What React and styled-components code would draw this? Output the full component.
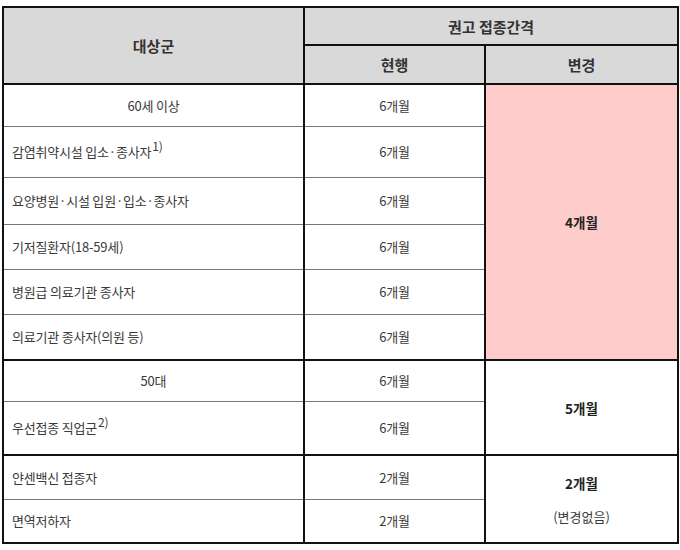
import React from 'react';
import styled, { createGlobalStyle } from 'styled-components';

const GlobalStyle = createGlobalStyle`
  html, body {
    margin: 0;
    padding: 0;
    background: #ffffff;
  }
  body {
    font-family: "Noto Sans CJK KR", "Noto Sans", sans-serif;
  }
`;

const Wrapper = styled.div`
  padding: 6px 3px 0 2px;
  width: 675px;
`;

const Table = styled.table`
  width: 675px;
  border-collapse: collapse;
  table-layout: fixed;
  border: 2px solid #111;
`;

const HeadCell = styled.th`
  background: #d9d9d9;
  border: 2px solid #111;
  color: #333;
  font-size: 15px;
  font-weight: 700;
  text-align: center;
  vertical-align: middle;
  padding: 0;
  height: ${(p) => p.$h}px;
`;

const Row = styled.tr`
  height: ${(p) => p.$h}px;
`;

const Cell = styled.td`
  border-left: 2px solid #111;
  border-right: 2px solid #111;
  border-top: ${(p) => (p.$groupStart ? '2px solid #111' : '1px solid #777')};
  border-bottom: 1px solid #777;
  color: #3a3a3a;
  font-size: 13px;
  letter-spacing: -0.2px;
  text-align: ${(p) => (p.$left ? 'left' : 'center')};
  padding: ${(p) => (p.$left ? '0 0 0 8px' : '0')};
  vertical-align: middle;
  white-space: nowrap;
`;

const ChangeCell = styled.td`
  border: 2px solid #111;
  background: ${(p) => (p.$highlight ? '#ffcccc' : '#ffffff')};
  color: #222;
  font-size: 13.5px;
  font-weight: 700;
  text-align: center;
  vertical-align: middle;
  padding: 0;
`;

const Note = styled.div`
  margin-top: 14px;
  font-weight: 400;
  color: #3a3a3a;
  font-size: 13px;
`;

const Sup = styled.sup`
  font-size: 12px;
  vertical-align: 6px;
  line-height: 0;
  margin-left: 1px;
`;

const groups = [
  {
    change: '4개월',
    highlight: true,
    rows: [
      { name: '60세 이상', center: true, current: '6개월', h: 42 },
      { name: '감염취약시설 입소·종사자', sup: '1)', current: '6개월', h: 51 },
      { name: '요양병원·시설 입원·입소·종사자', current: '6개월', h: 47 },
      { name: '기저질환자(18-59세)', current: '6개월', h: 45 },
      { name: '병원급 의료기관 종사자', current: '6개월', h: 45 },
      { name: '의료기관 종사자(의원 등)', current: '6개월', h: 46 },
    ],
  },
  {
    change: '5개월',
    rows: [
      { name: '50대', center: true, current: '6개월', h: 41 },
      { name: '우선접종 직업군', sup: '2)', current: '6개월', h: 54 },
    ],
  },
  {
    change: '2개월',
    note: '(변경없음)',
    rows: [
      { name: '얀센백신 접종자', current: '2개월', h: 44 },
      { name: '면역저하자', current: '2개월', h: 44 },
    ],
  },
];

export default function App() {
  return (
    <Wrapper>
      <GlobalStyle />
      <Table>
        <colgroup>
          <col style={{ width: 301 }} />
          <col style={{ width: 181 }} />
          <col style={{ width: 193 }} />
        </colgroup>
        <thead>
          <tr>
            <HeadCell rowSpan={2}>대상군</HeadCell>
            <HeadCell colSpan={2} $h={36}>권고 접종간격</HeadCell>
          </tr>
          <tr>
            <HeadCell $h={37}>현행</HeadCell>
            <HeadCell $h={37}>변경</HeadCell>
          </tr>
        </thead>
        <tbody>
          {groups.map((g) =>
            g.rows.map((r, i) => (
              <Row key={r.name} $h={r.h}>
                <Cell $left={!r.center} $groupStart={i === 0}>
                  {r.name}
                  {r.sup && <Sup>{r.sup}</Sup>}
                </Cell>
                <Cell $groupStart={i === 0}>{r.current}</Cell>
                {i === 0 && (
                  <ChangeCell rowSpan={g.rows.length} $highlight={g.highlight}>
                    {g.change}
                    {g.note && <Note>{g.note}</Note>}
                  </ChangeCell>
                )}
              </Row>
            ))
          )}
        </tbody>
      </Table>
    </Wrapper>
  );
}
